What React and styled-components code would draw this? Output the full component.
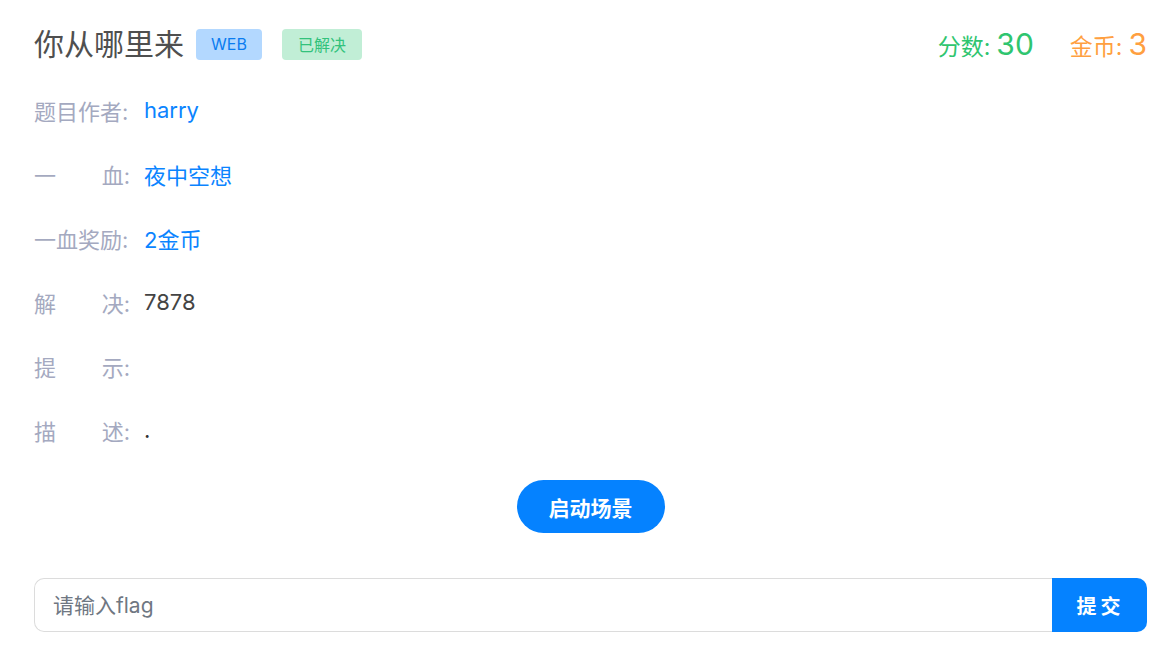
import React from "react";
import styled, { createGlobalStyle } from "styled-components";

const GlobalStyle = createGlobalStyle`
  body {
    margin: 0;
    background: #fff;
    font-family: "Inter", "Noto Sans CJK SC", sans-serif;
  }
`;

const Page = styled.div`
  padding: 28px 25px 30px 34px;
  display: flex;
  flex-direction: column;
`;

const Header = styled.div`
  display: flex;
  align-items: center;
  height: 32px;
`;

const Title = styled.h1`
  margin: 0 12px 0 0;
  font-size: 30px;
  font-weight: 400;
  color: #4f4f4f;
  line-height: 32px;
`;

const Badge = styled.span`
  display: inline-flex;
  align-items: center;
  justify-content: center;
  height: 31px;
  width: ${(p) => p.$w}px;
  margin-right: 20px;
  border-radius: 4px;
  font-size: 16px;
  background: ${(p) => p.$bg};
  color: ${(p) => p.$color};
`;

const Stats = styled.div`
  margin-left: auto;
  display: flex;
  align-items: baseline;
  gap: 36px;
`;

const Stat = styled.span`
  color: ${(p) => p.$color};
  font-size: 23px;
  b {
    font-weight: 400;
    font-size: 30px;
    margin-left: 6px;
  }
`;

const InfoList = styled.div`
  margin-top: 18px;
  display: flex;
  flex-direction: column;
`;

const Row = styled.div`
  display: flex;
  align-items: center;
  height: 64px;
  font-size: 22px;
`;

const Label = styled.span`
  display: flex;
  justify-content: space-between;
  width: 96px;
  margin-right: 14px;
  color: #a4a9c0;
  white-space: nowrap;
`;

const Value = styled.span`
  color: ${(p) => p.$color || "#0b84ff"};
`;

const LaunchWrap = styled.div`
  display: flex;
  justify-content: center;
  margin-top: 18px;
`;

const LaunchButton = styled.button`
  height: 53px;
  padding: 0 32px;
  border: none;
  border-radius: 27px;
  background: #0582ff;
  color: #fff;
  font-family: inherit;
  font-size: 21px;
  font-weight: 700;
  cursor: pointer;
`;

const FlagForm = styled.div`
  display: flex;
  margin-top: 45px;
  height: 54px;
`;

const FlagInput = styled.input`
  flex: 1;
  min-width: 0;
  box-sizing: border-box;
  height: 100%;
  border: 1px solid #dcdcdc;
  border-right: none;
  border-radius: 10px 0 0 10px;
  padding: 0 18px;
  font-family: inherit;
  font-size: 21px;
  color: #333;
  outline: none;
  &::placeholder {
    color: #6f7782;
  }
`;

const SubmitButton = styled.button`
  width: 95px;
  height: 100%;
  border: none;
  border-radius: 0 10px 10px 0;
  background: #0582ff;
  color: #fff;
  font-family: inherit;
  font-size: 20px;
  font-weight: 700;
  letter-spacing: 4px;
  padding-left: 8px;
  cursor: pointer;
`;

const info = [
  { label: ["题目作者:"], value: "harry" },
  { label: ["一", "血:"], value: "夜中空想" },
  { label: ["一血奖励:"], value: "2金币" },
  { label: ["解", "决:"], value: "7878", color: "#444" },
  { label: ["提", "示:"], value: "" },
  { label: ["描", "述:"], value: ".", color: "#333" },
];

export default function App() {
  return (
    <>
      <GlobalStyle />
      <Page>
        <Header>
          <Title>你从哪里来</Title>
          <Badge $w={66} $bg="#b3d8ff" $color="#0a7cf0">WEB</Badge>
          <Badge $w={80} $bg="#c1eed6" $color="#32c27c">已解决</Badge>
          <Stats>
            <Stat $color="#2fc56f">
              分数:<b>30</b>
            </Stat>
            <Stat $color="#ff9f40">
              金币:<b>3</b>
            </Stat>
          </Stats>
        </Header>
        <InfoList>
          {info.map((item) => (
            <Row key={item.label.join("")}>
              <Label>
                {item.label.map((part) => (
                  <span key={part}>{part}</span>
                ))}
              </Label>
              <Value $color={item.color}>{item.value}</Value>
            </Row>
          ))}
        </InfoList>
        <LaunchWrap>
          <LaunchButton>启动场景</LaunchButton>
        </LaunchWrap>
        <FlagForm>
          <FlagInput placeholder="请输入flag" />
          <SubmitButton>提交</SubmitButton>
        </FlagForm>
      </Page>
    </>
  );
}
